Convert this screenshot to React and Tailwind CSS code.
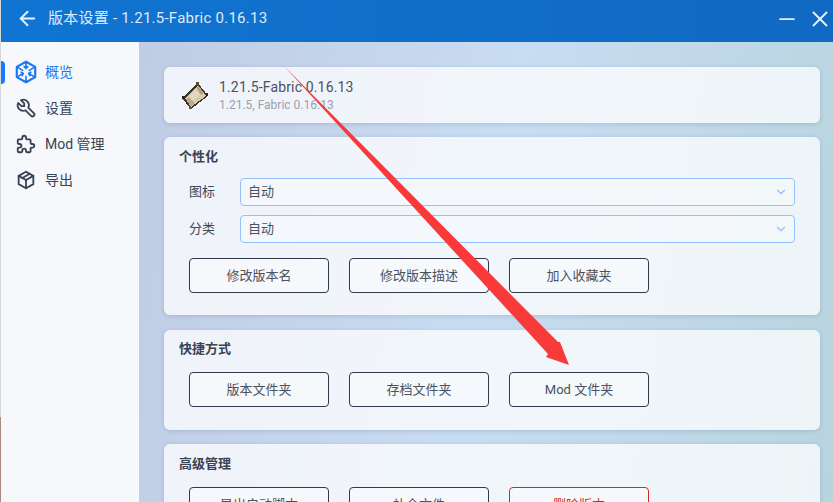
import React from "react";
import { TbTool, TbPuzzle, TbPackage, TbChevronDown } from "react-icons/tb";
import { ArrowLeft, Minus, X } from "lucide-react";

const FONT = "font-['Roboto','Noto_Sans_CJK_SC',sans-serif]";

function OverviewIcon() {
  return (
    <svg viewBox="0 0 24 24" className="w-[26px] h-[26px] shrink-0" fill="none" stroke="currentColor" strokeWidth="2" strokeLinejoin="round" strokeLinecap="round">
      <path d="M12 2.500l8.500 4.800v9.400L12 21.500l-8.500-4.800V7.300z" />
      <path d="M12 3v5.500M10.300 7l1.700 1.700L13.700 7" strokeWidth="1.500" />
      <path d="M4 16.500l5.500-3.200M7.500 12.200l2 1.100-1 2" strokeWidth="1.500" />
      <path d="M20 16.500l-5.500-3.200M16.500 12.200l-2 1.100 1 2" strokeWidth="1.500" />
      <path d="M4 7.500l5 3M20 7.500l-5 3M12 21v-5" strokeWidth="1.500" />
    </svg>
  );
}

function ScrollIcon() {
  return (
    <svg viewBox="0 0 28 28" className="w-7 h-7" shapeRendering="crispEdges">
      <polygon points="2,17 18,2 28,15 11,28" fill="#3b3428" />
      <rect x="16" y="1" width="3" height="3" fill="#5a4e3a" />
      <rect x="25" y="12" width="3" height="3" fill="#2c2719" />
      <rect x="2" y="15" width="3" height="3" fill="#2c2719" />
      <rect x="9" y="25" width="3" height="3" fill="#5a4e3a" />
      <polygon points="5,17 18,5 26,15 11,26" fill="#d8cbab" />
      <polygon points="16,6 19,5 24,12 21,14" fill="#b0a17f" />
      <polygon points="6,18 8,16 14,22 11,25" fill="#b9aa88" />
      <polygon points="9,15 16,9 20,14 13,20" fill="#e2d8bd" />
    </svg>
  );
}

function RedArrow() {
  return (
    <svg className="absolute left-0 top-0 pointer-events-none" width="833" height="502">
      <polygon
        points="284,66 558,342 560,342 569,365 546,357 548,354"
        fill="#f83a3a"
      />
    </svg>
  );
}

function NavItem({ icon, label, active }) {
  return (
    <div className={`relative flex items-center h-9 pl-[14px] gap-2 ${active ? "text-[#1a78f0]" : "text-[#3a4352]"}`}>
      {active && <div className="absolute left-0 top-[7px] w-1 h-[23px] rounded-r bg-[#1677ff]" />}
      <span className="w-[22px] flex justify-center text-[26px]">{icon}</span>
      <span className="text-sm">{label}</span>
    </div>
  );
}

function Btn({ children, danger }) {
  return (
    <div className={`w-[140px] h-[35px] shrink-0 flex items-center justify-center rounded border text-[13px] bg-white/40 ${danger ? "border-[#d8261c] text-[#d8261c]" : "border-[#303a4a] text-[#4a5260]"}`}>
      {children}
    </div>
  );
}

function Select({ label }) {
  return (
    <div className="flex items-center h-7">
      <span className="w-[51px] text-[13px] text-[#3f4856]">{label}</span>
      <div className="w-[555px] h-7 flex items-center justify-between pl-[7px] pr-[6px] rounded border border-[#93c0ff] bg-white/25 text-[13px] text-[#4a5260]">
        <span>自动</span>
        <TbChevronDown className="text-[#93c0ff] text-sm" />
      </div>
    </div>
  );
}

function Card({ title, className, children }) {
  return (
    <div className={`rounded-md bg-white/75 shadow-[0_1px_4px_rgba(60,90,140,0.22)] px-[15px] ${className}`}>
      <div className="h-[18px] flex items-center text-[13px] font-bold text-[#3a4352]">{title}</div>
      {children}
    </div>
  );
}

export default function App() {
  return (
    <div className={`relative flex w-[833px] h-[502px] overflow-hidden ${FONT}`}>
      {/* screenshot edge */}
      <div className="w-px flex flex-col shrink-0">
        <div className="h-[417px] bg-[#d8d8d8]" />
        <div className="flex-1 bg-[#a88a80]" />
      </div>

      <div className="flex-1 flex flex-col min-w-0">
        {/* title bar */}
        <div className="h-[42px] shrink-0 flex items-center pb-[5px] bg-[linear-gradient(90deg,#1174d2,#1069c2)]">
          <ArrowLeft className="ml-[15px] w-[23px] h-[23px] text-[#e6f0fb]" strokeWidth={2} />
          <span className="ml-[9px] text-[15px] tracking-[0.25px] text-[#dfeafa]">版本设置 - 1.21.5-Fabric 0.16.13</span>
          <div className="ml-auto flex items-center gap-2">
            <Minus className="w-6 h-6 text-[#e6f0fb]" strokeWidth={1.75} />
            <X className="w-[26px] h-[26px] text-[#e6f0fb]" strokeWidth={1.75} />
          </div>
        </div>

        <div className="flex-1 flex min-h-0">
          {/* sidebar */}
          <div className="w-[138px] shrink-0 bg-[#f6f8fc] pt-3">
            <NavItem active icon={<OverviewIcon />} label="概览" />
            <NavItem icon={<TbTool />} label="设置" />
            <NavItem icon={<TbPuzzle />} label="Mod 管理" />
            <NavItem icon={<TbPackage />} label="导出" />
          </div>

          {/* content */}
          <div className="flex-1 min-w-0 pl-[25px] pr-[13px] pt-[25px] bg-[linear-gradient(100deg,#c0cce4_0%,#c8dcf2_50%,#b8d4de_100%)]">
            <div className="h-14 rounded-md bg-white/75 shadow-[0_1px_4px_rgba(60,90,140,0.22)] flex items-center pl-4">
              <ScrollIcon />
              <div className="ml-[11px]">
                <div className="text-sm leading-[18px] tracking-[0.15px] text-[#4a5260]">1.21.5-Fabric 0.16.13</div>
                <div className="text-xs leading-[16px] mt-px text-[#9aa1ac]">1.21.5, Fabric 0.16.13</div>
              </div>
            </div>

            <Card title="个性化" className="h-[178px] mt-[14px] pt-[11px]">
              <div className="pl-[10px] mt-[12px] flex flex-col gap-[9px]">
                <Select label="图标" />
                <Select label="分类" />
              </div>
              <div className="pl-[10px] mt-[15px] flex gap-5">
                <Btn>修改版本名</Btn>
                <Btn>修改版本描述</Btn>
                <Btn>加入收藏夹</Btn>
              </div>
            </Card>

            <Card title="快捷方式" className="h-[100px] mt-[15px] pt-[10px]">
              <div className="pl-[10px] mt-[14px] flex gap-5">
                <Btn>版本文件夹</Btn>
                <Btn>存档文件夹</Btn>
                <Btn>Mod 文件夹</Btn>
              </div>
            </Card>

            <Card title="高级管理" className="h-[100px] mt-[14px] pt-[11px]">
              <div className="pl-[10px] mt-[14px] flex gap-5">
                <Btn>导出启动脚本</Btn>
                <Btn>补全文件</Btn>
                <Btn danger>删除版本</Btn>
              </div>
            </Card>
          </div>
        </div>
      </div>

      <RedArrow />
    </div>
  );
}
